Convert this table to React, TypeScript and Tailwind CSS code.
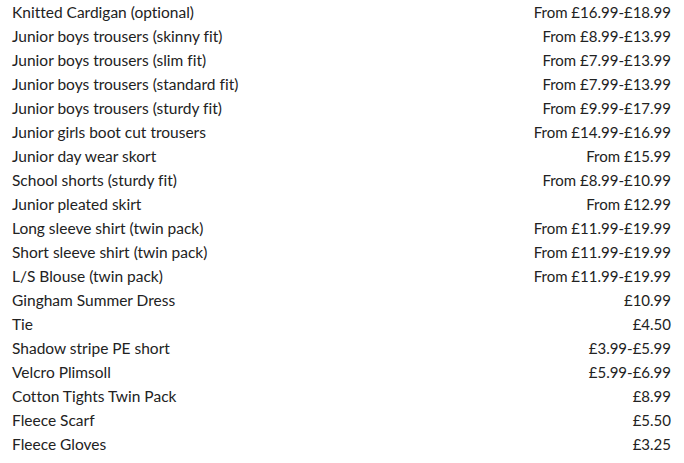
const items: [string, string][] = [
  ["Knitted Cardigan (optional)", "From £16.99-£18.99"],
  ["Junior boys trousers (skinny fit)", "From £8.99-£13.99"],
  ["Junior boys trousers (slim fit)", "From £7.99-£13.99"],
  ["Junior boys trousers (standard fit)", "From £7.99-£13.99"],
  ["Junior boys trousers (sturdy fit)", "From £9.99-£17.99"],
  ["Junior girls boot cut trousers", "From £14.99-£16.99"],
  ["Junior day wear skort", "From £15.99"],
  ["School shorts (sturdy fit)", "From £8.99-£10.99"],
  ["Junior pleated skirt", "From £12.99"],
  ["Long sleeve shirt (twin pack)", "From £11.99-£19.99"],
  ["Short sleeve shirt (twin pack)", "From £11.99-£19.99"],
  ["L/S Blouse (twin pack)", "From £11.99-£19.99"],
  ["Gingham Summer Dress", "£10.99"],
  ["Tie", "£4.50"],
  ["Shadow stripe PE short", "£3.99-£5.99"],
  ["Velcro Plimsoll", "£5.99-£6.99"],
  ["Cotton Tights Twin Pack", "£8.99"],
  ["Fleece Scarf", "£5.50"],
  ["Fleece Gloves", "£3.25"],
];

export default function App() {
  return (
    <div className="w-[684px] h-[463px] bg-white pl-3 pr-[13px] font-['Lato',sans-serif] text-[#222]">
      {items.map(([name, price]) => (
        <div key={name} className="flex justify-between items-baseline h-6 leading-6">
          <span className="text-[15.5px] [font-variant-ligatures:none]">{name}</span>
          <span className="text-[15px]">{price}</span>
        </div>
      ))}
    </div>
  );
}
